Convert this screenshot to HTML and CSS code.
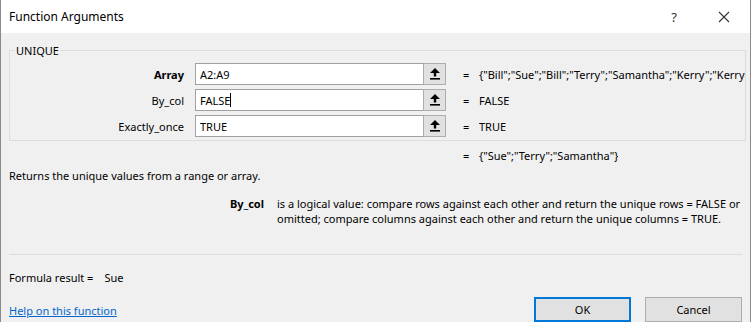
FILE: index.html
```html
<!DOCTYPE html>
<html lang="en">
<head>
    <meta charset="UTF-8">
    <title>Function Arguments</title>
    <link rel="stylesheet" href="styles.css">
</head>
<body>
    <div class="dialog">
        <div class="titlebar">
            <span class="title">Function Arguments</span>
            <span class="help-btn">?</span>
            <span class="close-btn">
                <svg width="12" height="12" viewBox="0 0 12 12"><path d="M1 1 L11 11 M11 1 L1 11" stroke="#333" stroke-width="1.1" fill="none"/></svg>
            </span>
        </div>

        <div class="content">
            <fieldset class="group">
                <legend>UNIQUE</legend>

                <div class="arg-row">
                    <label class="arg-name bold">Array</label>
                    <div class="field">
                        <input type="text" value="A2:A9">
                        <span class="pick-btn">
                            <svg width="10" height="12" viewBox="0 0 10 12"><path d="M5 0 L10 5 H6.2 V8.5 H3.8 V5 H0 Z" fill="#000"/><rect x="0" y="10" width="10" height="1.6" fill="#000"/></svg>
                        </span>
                    </div>
                    <span class="eq">=</span>
                    <span class="arg-value">{"Bill";"Sue";"Bill";"Terry";"Samantha";"Kerry";"Kerry</span>
                </div>

                <div class="arg-row">
                    <label class="arg-name">By_col</label>
                    <div class="field">
                        <div class="input-text">FALSE<span class="caret"></span></div>
                        <span class="pick-btn">
                            <svg width="10" height="12" viewBox="0 0 10 12"><path d="M5 0 L10 5 H6.2 V8.5 H3.8 V5 H0 Z" fill="#000"/><rect x="0" y="10" width="10" height="1.6" fill="#000"/></svg>
                        </span>
                    </div>
                    <span class="eq">=</span>
                    <span class="arg-value">FALSE</span>
                </div>

                <div class="arg-row">
                    <label class="arg-name">Exactly_once</label>
                    <div class="field">
                        <input type="text" value="TRUE">
                        <span class="pick-btn">
                            <svg width="10" height="12" viewBox="0 0 10 12"><path d="M5 0 L10 5 H6.2 V8.5 H3.8 V5 H0 Z" fill="#000"/><rect x="0" y="10" width="10" height="1.6" fill="#000"/></svg>
                        </span>
                    </div>
                    <span class="eq">=</span>
                    <span class="arg-value">TRUE</span>
                </div>
            </fieldset>

            <div class="result-row">
                <span class="eq">=</span>
                <span class="arg-value">{"Sue";"Terry";"Samantha"}</span>
            </div>

            <p class="summary">Returns the unique values from a range or array.</p>

            <div class="arg-help">
                <span class="help-name">By_col</span>
                <p class="help-text">is a logical value: compare rows against each other and return the unique rows = FALSE or omitted; compare columns against each other and return the unique columns = TRUE.</p>
            </div>

            <hr class="divider">

            <div class="formula-result">Formula result =<span class="result-value">Sue</span></div>

            <div class="footer">
                <a href="#" class="help-link">Help on this function</a>
                <div class="actions">
                    <button class="btn btn-default">OK</button>
                    <button class="btn">Cancel</button>
                </div>
            </div>
        </div>
    </div>
</body>
</html>
```

FILE: styles.css
```css
/* Global */
body {
    margin: 0;
    background-color: #ffffff;
    font-family: 'Noto Sans', 'Open Sans', sans-serif;
    font-size: 11px;
    color: #000000;
    overflow: hidden;
}

.dialog {
    width: 749px;
    height: 322px;
    overflow: hidden;
    background-color: #f0f0f0;
    border-left: 1px solid #8a8a8a;
    border-right: 1px solid #8a8a8a;
}

/* Title bar */
.titlebar {
    height: 33px;
    background-color: #ffffff;
    display: flex;
    align-items: center;
}

.title {
    padding-left: 8px;
    font-size: 12px;
    flex: 1;
}

.help-btn {
    width: 14px;
    text-align: center;
    font-size: 13px;
    color: #333;
    margin-right: 37px;
}

.close-btn {
    display: flex;
    margin-right: 20px;
}

/* Content */
.content {
    padding: 0 8px;
}

.group {
    margin: 10px 0 0 0;
    padding: 5px 0 3px 0;
    border: 1px solid #dcdcdc;
    display: flex;
    flex-direction: column;
    gap: 4px;
}

.group legend {
    margin-left: 5px;
    padding: 0 1px;
    line-height: 15px;
}

.arg-row, .result-row {
    display: flex;
    align-items: center;
    height: 22px;
}

.arg-name {
    width: 174px;
    text-align: right;
    margin-right: 11px;
}

.bold {
    font-weight: bold;
}

.field {
    display: flex;
    width: 251px;
    height: 22px;
}

.field input, .input-text {
    box-sizing: border-box;
    width: 228px;
    height: 22px;
    margin: 0;
    padding: 0 4px;
    border: 1px solid #a0a0a0;
    border-right: none;
    background-color: #ffffff;
    font-family: inherit;
    font-size: 11px;
    color: #000;
    outline: none;
}

.input-text {
    display: flex;
    align-items: center;
}

.caret {
    display: inline-block;
    width: 1px;
    height: 14px;
    background-color: #000;
}

.pick-btn {
    box-sizing: border-box;
    width: 23px;
    height: 22px;
    border: 1px solid #adadad;
    background-color: #e1e1e1;
    display: flex;
    align-items: center;
    justify-content: center;
}

.eq {
    width: 16px;
    margin-left: 17px;
}

.arg-value {
    white-space: nowrap;
    overflow: hidden;
}

.result-row {
    margin-top: 5px;
    padding-left: 437px;
    height: 18px;
}

.summary {
    margin: 4px 0 0 0;
    line-height: 15px;
}

/* Argument help */
.arg-help {
    display: flex;
    margin-top: 13px;
}

.help-name {
    font-weight: bold;
    width: 268px;
    text-align: right;
    padding-right: 13px;
    box-sizing: border-box;
    line-height: 15px;
    flex-shrink: 0;
}

.help-text {
    margin: 0;
    width: 470px;
    flex-shrink: 0;
    line-height: 15px;
}

.divider {
    border: none;
    border-top: 1px solid #dcdcdc;
    margin: 28px 0 0 0;
}

.formula-result {
    margin-top: 15px;
    line-height: 15px;
}

.result-value {
    margin-left: 11px;
}

/* Footer */
.footer {
    display: flex;
    justify-content: space-between;
    align-items: flex-end;
    margin-top: 12px;
}

.help-link {
    color: #0066cc;
    line-height: 15px;
    margin-bottom: 4px;
}

.actions {
    display: flex;
    gap: 14px;
}

.btn {
    box-sizing: border-box;
    width: 97px;
    height: 25px;
    border: 1px solid #adadad;
    background-color: #e1e1e1;
    font-family: inherit;
    font-size: 11px;
    color: #000;
    padding: 0;
}

.btn-default {
    border: 2px solid #0078d7;
}
```
